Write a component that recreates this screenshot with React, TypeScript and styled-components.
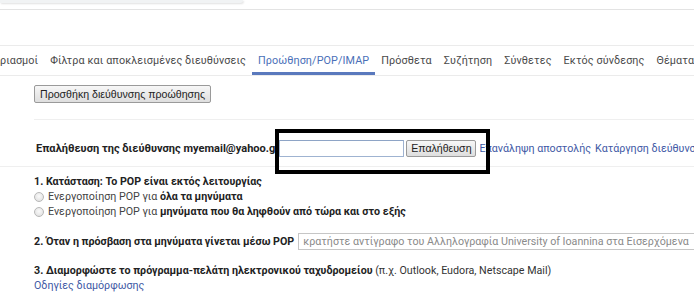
import React from "react";
import styled, { createGlobalStyle } from "styled-components";

const GlobalStyle = createGlobalStyle`
  html, body {
    margin: 0;
    padding: 0;
    background: #fff;
    overflow: hidden;
  }
  body {
    width: 694px;
    height: 300px;
    font-family: Roboto, "Liberation Sans", Arial, sans-serif;
    color: #222;
  }
`;

const Page = styled.div`
  width: 694px;
  height: 300px;
  overflow: hidden;
`;

const TopBar = styled.div`
  height: 9px;
  border-bottom: 1px solid #e3e3e3;
`;

const SearchStub = styled.div`
  width: 243px;
  height: 3px;
  background: #f1f3f4;
  border-bottom-right-radius: 6px;
  box-shadow: 1px 1px 2px rgba(0, 0, 0, 0.12);
`;

const TabBar = styled.nav`
  margin-top: 35px;
  height: 29px;
  border-top: 1px solid #ebebeb;
  border-bottom: 1px solid #ebebeb;
  overflow: hidden;
`;

const TabList = styled.div`
  display: flex;
  margin-left: -31px;
  height: 100%;
  white-space: nowrap;
`;

const Tab = styled.div<{ $active?: boolean }>`
  display: flex;
  align-items: center;
  font-family: Roboto, Arial, sans-serif;
  font-size: 10.8px;
  letter-spacing: 0.1px;
  padding: 2px 6px 0;
  color: ${(p) => (p.$active ? "#4a6fb8" : "#4a4a4a")};
  border-bottom: 3px solid ${(p) => (p.$active ? "#5a79bd" : "transparent")};
  box-sizing: border-box;
  height: 100%;
`;

const Content = styled.div`
  padding-left: 34px;
`;

const OldButton = styled.button`
  font-family: "Liberation Sans", Arial, sans-serif;
  font-size: 10.6px;
  color: #222;
  height: 18px;
  padding: 0 5px;
  margin: 0;
  border: 1px solid #9a9a9a;
  border-radius: 2px;
  background: linear-gradient(#f7f7f7, #dedede);
  cursor: pointer;
  line-height: 16px;
`;

const AddRow = styled.div`
  padding-top: 7px;
  height: 44px;
  box-sizing: border-box;
  border-bottom: 1px solid #efefef;
`;

const VerifyRow = styled.div`
  display: flex;
  align-items: center;
  height: 47px;
  box-sizing: border-box;
  padding: 20px 0 9px 36px;
  margin-left: -34px;
  border-bottom: 1px solid #efefef;
  font-size: 10.7px;
  white-space: nowrap;
`;

const VerifyLabel = styled.span`
  color: #222;
  font-weight: bold;
  font-size: 11.05px;
`;

const Highlight = styled.div`
  display: flex;
  align-items: center;
  gap: 2px;
  position: relative;
`;

const Annotation = styled.div`
  position: absolute;
  left: -4px;
  top: -11px;
  width: 215px;
  height: 45px;
  border: 4px solid #000;
  box-sizing: border-box;
  pointer-events: none;
`;

const TextInput = styled.input`
  width: 125px;
  height: 17px;
  box-sizing: border-box;
  border: 1px solid #9fb3d1;
  border-top-color: #8ea4c6;
  padding: 0 2px;
  margin: 0;
`;

const SmallButton = styled(OldButton)`
  height: 17px;
  width: 70px;
  padding: 0;
  line-height: 15px;
`;

const LinkGroup = styled.div`
  margin-left: 3px;
  display: flex;
  gap: 4px;
`;

const Link = styled.a`
  color: #4159a5;
  text-decoration: none;
  font-family: Roboto, Arial, sans-serif;
  font-size: 10.7px;
`;

const Section = styled.div<{ $top: number }>`
  margin-top: ${(p) => p.$top}px;
  font-size: 10.7px;
  line-height: 15px;
`;

const Heading = styled.div`
  font-weight: bold;
  color: #222;
`;

const RadioRow = styled.label`
  display: flex;
  align-items: center;
  gap: 4px;
  color: #444;
  b {
    color: #222;
  }
`;

const Radio = styled.span`
  width: 10px;
  height: 10px;
  border-radius: 50%;
  border: 1px solid #b8b8b8;
  background: radial-gradient(circle at 50% 40%, #fafafa, #dcdcdc);
  box-sizing: border-box;
  flex: none;
`;

const InlineRow = styled.div`
  display: flex;
  align-items: center;
  gap: 4px;
  white-space: nowrap;
`;

const SelectBox = styled.div`
  height: 17px;
  box-sizing: border-box;
  border: 1px solid #c6c6c6;
  border-right: none;
  padding: 0 0 0 4px;
  color: #8a8a8a;
  line-height: 15px;
  flex: 1;
  overflow: hidden;
`;

const Muted = styled.span`
  color: #333;
`;

const App = () => {
  const tabs = [
    "Λογαριασμοί",
    "Φίλτρα και αποκλεισμένες διευθύνσεις",
    "Προώθηση/POP/IMAP",
    "Πρόσθετα",
    "Συζήτηση",
    "Σύνθετες",
    "Εκτός σύνδεσης",
    "Θέματα",
  ];

  return (
    <Page>
      <GlobalStyle />
      <TopBar>
        <SearchStub />
      </TopBar>
      <TabBar>
        <TabList>
          {tabs.map((t) => (
            <Tab key={t} $active={t === "Προώθηση/POP/IMAP"}>
              {t}
            </Tab>
          ))}
        </TabList>
      </TabBar>
      <Content>
        <AddRow>
          <OldButton>Προσθήκη διεύθυνσης προώθησης</OldButton>
        </AddRow>
        <VerifyRow>
          <VerifyLabel>Επαλήθευση της διεύθυνσης myemail@yahoo.gr</VerifyLabel>
          <Highlight>
            <TextInput />
            <SmallButton>Επαλήθευση</SmallButton>
            <Annotation />
          </Highlight>
          <LinkGroup>
            <Link href="#">Επανάληψη αποστολής</Link>
            <Link href="#">Κατάργηση διεύθυνσης</Link>
          </LinkGroup>
        </VerifyRow>
        <Section $top={7}>
          <Heading>1. Κατάσταση: Το POP είναι εκτός λειτουργίας</Heading>
          <RadioRow>
            <Radio />
            <span>
              Ενεργοποίηση POP για <b>όλα τα μηνύματα</b>
            </span>
          </RadioRow>
          <RadioRow>
            <Radio />
            <span>
              Ενεργοποίηση POP για <b>μηνύματα που θα ληφθούν από τώρα και στο εξής</b>
            </span>
          </RadioRow>
        </Section>
        <Section $top={14}>
          <InlineRow>
            <Heading>2. Όταν η πρόσβαση στα μηνύματα γίνεται μέσω POP</Heading>
            <SelectBox>
              κρατήστε αντίγραφο του Αλληλογραφία University of Ioannina στα Εισερχόμενα
            </SelectBox>
          </InlineRow>
        </Section>
        <Section $top={13}>
          <div>
            <b>3. Διαμορφώστε το πρόγραμμα-πελάτη ηλεκτρονικού ταχυδρομείου</b>{" "}
            <Muted>(π.χ. Outlook, Eudora, Netscape Mail)</Muted>
          </div>
          <Link href="#">Οδηγίες διαμόρφωσης</Link>
        </Section>
      </Content>
    </Page>
  );
};

export default App;
